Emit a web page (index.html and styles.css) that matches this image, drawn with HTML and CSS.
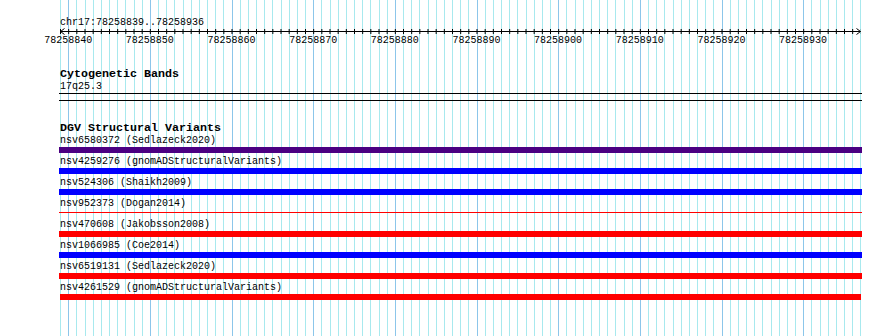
FILE: index.html
```html
<!doctype html>
<html lang="en-US">
  <head>
    <meta charset="UTF-8" />
    <meta name="viewport" content="width=device-width, initial-scale=1" />
    <link rel="stylesheet" href="styles.css">
  </head>
  <body>
    <div class="view">
      <div class="ruler">
        <div class="ruler__loc">chr17:78258839..78258936</div>
        <svg class="ruler__scale" width="802" height="7" viewBox="0 0 802 7">
          <line x1="0" y1="3.5" x2="800.5" y2="3.5" stroke="#000" stroke-width="1" />
          <line x1="0" y1="3.5" x2="800.5" y2="3.5" stroke="#000" stroke-width="5" stroke-dasharray="1 7.1667" />
          <path d="M4.5 0.5 L0.5 3.5 L4.5 6.5" fill="none" stroke="#000" stroke-width="1" />
          <path d="M796.5 0.5 L800.5 3.5 L796.5 6.5" fill="none" stroke="#000" stroke-width="1" />
        </svg>
        <div class="ruler__nums">
          <span>78258840</span>
          <span>78258850</span>
          <span>78258860</span>
          <span>78258870</span>
          <span>78258880</span>
          <span>78258890</span>
          <span>78258900</span>
          <span>78258910</span>
          <span>78258920</span>
          <span>78258930</span>
        </div>
      </div>

      <div class="track track--bands">
        <div class="track__title">Cytogenetic Bands</div>
        <div class="feature__label">17q25.3</div>
        <div class="band"></div>
      </div>

      <div class="track track--dgv">
        <div class="track__title">DGV Structural Variants</div>
        <div class="feature">
          <div class="feature__label">nsv6580372 (Sedlazeck2020)</div>
          <div class="feature__bar feature__bar--purple"></div>
        </div>
        <div class="feature">
          <div class="feature__label">nsv4259276 (gnomADStructuralVariants)</div>
          <div class="feature__bar feature__bar--blue"></div>
        </div>
        <div class="feature">
          <div class="feature__label">nsv524306 (Shaikh2009)</div>
          <div class="feature__bar feature__bar--blue"></div>
        </div>
        <div class="feature">
          <div class="feature__label">nsv952373 (Dogan2014)</div>
          <div class="feature__bar feature__bar--thin"></div>
        </div>
        <div class="feature">
          <div class="feature__label">nsv470608 (Jakobsson2008)</div>
          <div class="feature__bar feature__bar--red"></div>
        </div>
        <div class="feature">
          <div class="feature__label">nsv1066985 (Coe2014)</div>
          <div class="feature__bar feature__bar--blue"></div>
        </div>
        <div class="feature">
          <div class="feature__label">nsv6519131 (Sedlazeck2020)</div>
          <div class="feature__bar feature__bar--red"></div>
        </div>
        <div class="feature">
          <div class="feature__label">nsv4261529 (gnomADStructuralVariants)</div>
          <div class="feature__bar feature__bar--red feature__bar--short"></div>
        </div>
      </div>
    </div>
  </body>
</html>
```

FILE: styles.css
```css
body {
  margin: 0;
  background: #fff;
  color: #000;
  font-family: "Liberation Mono", "DejaVu Sans Mono", monospace;
  font-size: 10px;
}

.view {
  box-sizing: border-box;
  width: 802px;
  min-height: 336px;
  margin-left: 60px;
  padding-top: 17px;
  background-image:
    repeating-linear-gradient(90deg, transparent 0 8.1667px, #8cc6ea 8.1667px 9.1667px, transparent 9.1667px 81.667px),
    repeating-linear-gradient(90deg, #a8e9ee 0 1px, transparent 1px 8.1667px);
}

/* ruler */
.ruler__loc {
  line-height: 11px;
}

.ruler__scale {
  display: block;
}

.ruler__nums {
  display: flex;
  margin-left: -32.67px;
  line-height: 12px;
}

.ruler__nums > span {
  flex: 0 0 81.667px;
  text-align: center;
}

/* tracks */
.track {
  margin-top: 21px;
}

.track__title {
  font-size: 11.67px;
  font-weight: bold;
  line-height: 13px;
}

.band {
  box-sizing: border-box;
  width: 803px;
  height: 8px;
  margin-left: -1px;
  border-top: 1px solid #000;
  border-bottom: 1px solid #000;
}

.feature__label {
  line-height: 12px;
  white-space: nowrap;
}

.feature__bar {
  width: 803px;
  height: 6px;
  margin-left: -1px;
  margin-bottom: 3px;
}

.feature__bar--purple {
  background: #4b0082;
}

.feature__bar--blue {
  background: #0000ff;
}

.feature__bar--red {
  background: #ff0000;
}

.feature__bar--thin {
  height: 1px;
  margin-top: 2px;
  margin-bottom: 6px;
  background: #ff0000;
}

.feature__bar--short {
  width: 801px;
  margin-left: 0;
}
```
